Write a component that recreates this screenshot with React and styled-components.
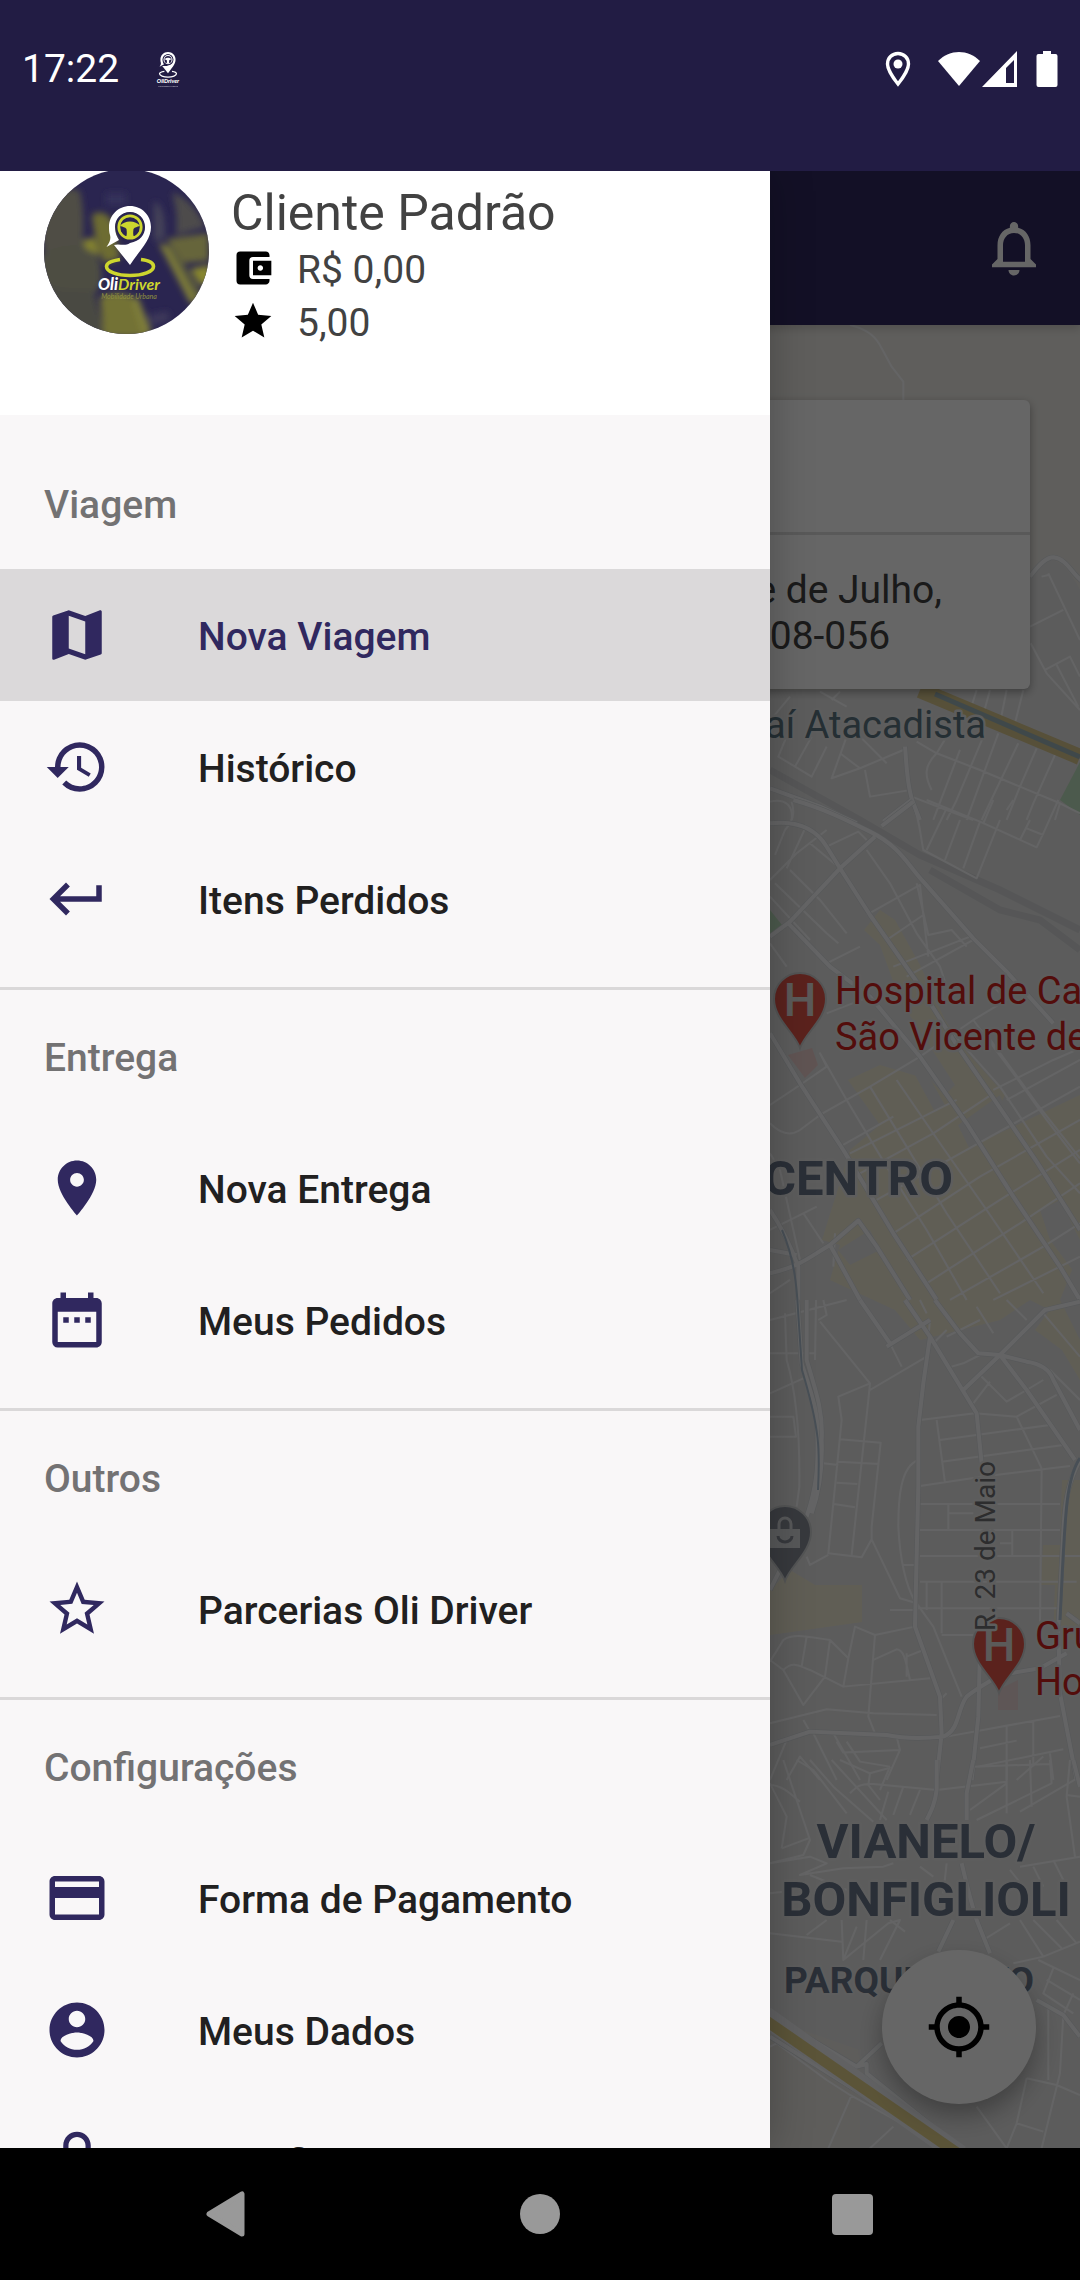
import React, { useState } from 'react';
import styled, { createGlobalStyle } from 'styled-components';
import {
  MdAccountBalanceWallet,
  MdCreditCard,
  MdDateRange,
  MdHistory,
  MdKeyboardReturn,
  MdLockOutline,
  MdMyLocation,
  MdNotificationsNone,
  MdStar,
  MdStarBorder,
} from 'react-icons/md';

const GlobalStyle = createGlobalStyle`
  * {
    box-sizing: border-box;
  }
  body {
    margin: 0;
    font-family: Roboto, 'Open Sans', sans-serif;
    background-color: #000;
  }
  button, a {
    font-family: inherit;
  }
`

const Screen = styled.div`
  display: flex;
  flex-direction: column;
  height: 100vh;
  overflow: hidden;
`

const StatusBar = styled.header`
  display: flex;
  align-items: center;
  height: 171px;
  padding: 0 22px 34px;
  background-color: #221c44;
  color: white;
`

const Clock = styled.span`
  flex: 1;
  display: flex;
  align-items: center;
  gap: 36px;
  font-size: 39px;
  line-height: 46px;
`

const StatusIcons = styled.div`
  display: flex;
  align-items: center;

  svg {
    display: block;
  }
  svg:first-child {
    margin-right: 27px;
  }
  svg:last-child {
    margin-left: 18px;
  }
`

const Content = styled.div`
  position: relative;
  flex: 1;
  min-height: 0;
  display: flex;
  flex-direction: column;
  overflow: hidden;
`

const AppBar = styled.div`
  position: relative;
  display: flex;
  align-items: center;
  justify-content: flex-end;
  height: 154px;
  padding: 0 33px;
  background-color: #302860;
  color: white;
  box-shadow: 0 4px 8px rgba(0, 0, 0, .15);
  z-index: 1;
`

const IconButton = styled.button`
  display: flex;
  padding: 0;
  border: 0;
  background: none;
  color: inherit;
  cursor: pointer;
`

const MapArea = styled.main`
  position: relative;
  flex: 1;
  min-height: 0;
  padding: 75px 50px;
  overflow: hidden;
`

const MapCanvas = styled.svg`
  position: absolute;
  inset: 0;
  width: 100%;
  height: 100%;
`

const AddressCard = styled.section`
  position: relative;
  border-radius: 6px;
  background-color: white;
  color: #424242;
  box-shadow: 0 3px 8px rgba(0, 0, 0, .35);
`

const AddressField = styled.div`
  height: 135px;
  border-bottom: 3px solid #dedede;
`

const Address = styled.p`
  width: fit-content;
  margin: 0 0 0 auto;
  padding: 32px 88px 30px 0;
  font-size: 39px;
  line-height: 46px;
`

const LocateButton = styled.button`
  position: absolute;
  right: 44px;
  bottom: 44px;
  display: flex;
  align-items: center;
  justify-content: center;
  width: 154px;
  height: 154px;
  border: 0;
  border-radius: 50%;
  background-color: white;
  color: black;
  box-shadow: 0 12px 24px rgba(0, 0, 0, .3);
  cursor: pointer;
`

const Scrim = styled.div`
  position: absolute;
  inset: 0;
  background-color: rgba(0, 0, 0, .6);
  z-index: 2;
`

const Drawer = styled.aside`
  position: absolute;
  top: 0;
  bottom: 0;
  left: 0;
  width: 770px;
  max-width: 90%;
  overflow: hidden;
  background-color: #f9f7f8;
  box-shadow: 0 0 40px rgba(0, 0, 0, .25);
  z-index: 3;
`

const Profile = styled.div`
  display: flex;
  gap: 22px;
  height: 246px;
  margin-top: -2px;
  padding-left: 44px;
  background-color: white;
  color: #424242;
`

const Avatar = styled.svg`
  flex: none;
  width: 165px;
  height: 165px;
  border-radius: 50%;
`

const ProfileInfo = styled.div`
  display: flex;
  flex-direction: column;
  gap: 4px;
  padding-top: 15px;
`

const Name = styled.h1`
  margin: 0;
  font-size: 50px;
  font-weight: 400;
  line-height: 58px;
`

const Stat = styled.div`
  display: flex;
  gap: 22px;
  font-size: 39px;
  line-height: 49px;

  svg {
    color: black;
  }
`

const Group = styled.section`
  padding-bottom: 22px;

  &:first-child {
    padding-top: 22px;
  }
  & + & {
    border-top: 3px solid #dad8d9;
  }
`

const GroupTitle = styled.h2`
  margin: 0;
  padding: 4px 44px 0;
  font-size: 39px;
  font-weight: 500;
  line-height: 128px;
  color: #737273;
`

const Item = styled.a`
  display: flex;
  align-items: center;
  gap: 88px;
  height: 132px;
  padding: 0 44px;
  background-color: ${props => (props.$active ? '#dbd9da' : 'transparent')};
  color: ${props => (props.$active ? '#30285f' : '#212020')};
  font-size: 39px;
  font-weight: 500;
  text-decoration: none;

  svg {
    flex: none;
    color: #30285f;
  }
  span {
    padding-top: 4px;
  }
`

const NavBar = styled.footer`
  display: flex;
  height: 132px;
  padding: 0 72px;
  background-color: black;
  color: #999;
`

const NavButton = styled(IconButton)`
  flex: 1;
  align-items: center;
  justify-content: center;
`

const MapIcon = () => (
  <svg width="66" height="66" viewBox="0 0 24 24" fill="currentColor">
    <path d="M20.5 3l-.16.03L15 5.1 9 3 3.36 4.9c-.21.07-.36.25-.36.48V20.5c0 .28.22.5.5.5l.16-.03L9 18.9l6 2.1 5.64-1.9c.21-.07.36-.25.36-.48V3.5c0-.28-.22-.5-.5-.5zM15 19l-6-2.11V5l6 2.11V19z" />
  </svg>
)

const PlaceIcon = () => (
  <svg width="66" height="66" viewBox="0 0 24 24" fill="currentColor">
    <path d="M12 2C8.13 2 5 5.13 5 9c0 5.25 7 13 7 13s7-7.75 7-13c0-3.87-3.13-7-7-7zm0 9.5c-1.38 0-2.5-1.12-2.5-2.5s1.12-2.5 2.5-2.5 2.5 1.12 2.5 2.5-1.12 2.5-2.5 2.5z" />
  </svg>
)

const AccountIcon = () => (
  <svg width="66" height="66" viewBox="0 0 24 24" fill="currentColor">
    <path d="M12 2C6.48 2 2 6.48 2 12s4.48 10 10 10 10-4.48 10-10S17.52 2 12 2zm0 3c1.66 0 3 1.34 3 3s-1.34 3-3 3-3-1.34-3-3 1.34-3 3-3zm0 14.2c-2.5 0-4.71-1.28-6-3.22.03-1.99 4-3.08 6-3.08 1.99 0 5.97 1.09 6 3.08-1.29 1.94-3.5 3.22-6 3.22z" />
  </svg>
)

const menu = [
  {
    title: 'Viagem',
    items: [
      { id: 'nova-viagem', label: 'Nova Viagem', icon: <MapIcon /> },
      { id: 'historico', label: 'Histórico', icon: <MdHistory size={66} /> },
      { id: 'itens-perdidos', label: 'Itens Perdidos', icon: <MdKeyboardReturn size={66} /> },
    ],
  },
  {
    title: 'Entrega',
    items: [
      { id: 'nova-entrega', label: 'Nova Entrega', icon: <PlaceIcon /> },
      { id: 'meus-pedidos', label: 'Meus Pedidos', icon: <MdDateRange size={66} /> },
    ],
  },
  {
    title: 'Outros',
    items: [
      { id: 'parcerias', label: 'Parcerias Oli Driver', icon: <MdStarBorder size={66} /> },
    ],
  },
  {
    title: 'Configurações',
    items: [
      { id: 'pagamento', label: 'Forma de Pagamento', icon: <MdCreditCard size={66} /> },
      { id: 'meus-dados', label: 'Meus Dados', icon: <AccountIcon /> },
      { id: 'senha', label: 'Redefinir Senha', icon: <MdLockOutline size={66} /> },
    ],
  },
]

// pin with the steering wheel, shared by the avatar and the notification icon
const LogoMark = ({ accent, hole }) => (
  <g>
    <path
      d="M76 90.5C66 92 62.500 94.500 62.500 97.500C62.500 102.500 73 106.500 86 106.500S109.500 102.500 109.500 97.500C109.500 94 105 91.500 97 90.500"
      fill="none"
      stroke={accent}
      strokeWidth="3.600"
    />
    <path d="M86 37C98 37 107 46.500 107 58C107 72 94 83 86 96L70 76C76 74 80 78 86 74C96 72 101 66 101 58C101 50 95 43 86 43C77 43 71 50 71 58C71 64 73 68 75 71L62.500 78C66 73 67 70 66 66C65 63 65 61 65 58C65 46.500 74 37 86 37Z" fill="#fff" />
    <circle cx="86" cy="58" r="14.500" fill={hole} />
    <circle cx="86" cy="58" r="11.200" fill="none" stroke={accent} strokeWidth="2.800" />
    <path d="M76 57C80 51 92 51 96 57C93 58 91 58 89.500 60C89 64 89 66 90 68H82C83 66 83 64 82.500 60C81 58 79 58 76 57Z" fill={accent} />
    <path d="M81.500 60.500L77 61.500C78 64.500 80 66 82 67ZM90.500 60.500L95 61.500C94 64.500 92 66 90 67Z" fill={hole} />
  </g>
)

const ClientAvatar = () => (
  <Avatar viewBox="0 0 165 165" role="img" aria-label="Oli Driver">
    <defs>
      <filter id="photo" x="-10%" y="-10%" width="120%" height="120%">
        <feGaussianBlur stdDeviation="3" />
      </filter>
    </defs>
    <rect width="165" height="165" fill="#2a2550" />
    <g filter="url(#photo)">
      <path d="M-5 50C8 22 26 16 36 22C40 40 40 60 38 78L0 84Z" fill="#4f4d45" />
      <path d="M-5 88C12 74 46 72 54 86C60 106 58 122 48 126L-5 118Z" fill="#4e4d42" />
      <path d="M0 120L50 122L62 170H10Z" fill="#4a4843" />
      <path d="M48 46C58 40 66 46 70 56L76 90L60 94C54 80 50 66 48 46Z" fill="#6d6c33" />
      <path d="M38 72L50 68L56 86L42 80Z" fill="#83822f" />
      <path d="M56 128C70 122 88 124 92 132L104 168H60Z" fill="#737236" />
      <path d="M88 130L94 128L108 164H98Z" fill="#7f7e3a" />
      <path d="M128 24C140 26 154 40 162 58L132 66C134 50 132 36 128 24Z" fill="#4d4b4c" />
      <path d="M110 32C120 36 122 56 120 70L110 72Z" fill="#454258" />
      <path d="M122 70L165 64V92L140 94Z" fill="#66653a" />
      <path d="M114 74L130 78L160 128L148 136Z" fill="#5c5b3e" />
      <path d="M146 100L166 96V114L156 116Z" fill="#87862f" />
      <path d="M116 76L122 76L152 130L146 134Z" fill="#807f38" />
      <path d="M104 146L124 142L126 152L108 156Z" fill="#3c395a" />
      <path d="M62 24H82V36H62Z" fill="#35315a" />
    </g>
    <LogoMark accent="#cdd62e" hole="#2a2550" />
    <g fontFamily="Lato, sans-serif" fontStyle="italic" textAnchor="middle">
      <text x="85" y="121" fontSize="16" fontWeight="900" fill="#fff">
        Oli<tspan fill="#cdd62e" fontWeight="700">Driver</tspan>
      </text>
      <text x="85" y="130" fontSize="7" fill="#8f9040">Mobilidade Urbana</text>
    </g>
  </Avatar>
)

const NotificationLogo = () => (
  <svg width="26" height="36" viewBox="50 34 72 100">
    <LogoMark accent="#fff" hole="#221c44" />
    <g fontFamily="Lato, sans-serif" fontStyle="italic" textAnchor="middle" fill="#fff">
      <text x="86" y="124" fontSize="16" fontWeight="900">OliDriver</text>
      <text x="86" y="133" fontSize="7" opacity=".6">Mobilidade Urbana</text>
    </g>
  </svg>
)

// Roads are kept per tile, in the tile's own units (3 to a pixel)
const tiles = [
  {
    y: 320,
    major: [
      'M810 770C840 730 860 712 880 712C920 716 935 760 965 782',
      'M435 1280C440 1330 440 1400 460 1450L480 1500',
      'M30 1405L180 1460L290 1510',
      'M370 1505L455 1440',
      'M545 1110L530 1150',
    ],
    minor: [
      'M270 15C330 30 350 55 365 85L395 140L430 185V240',
      'M810 920L910 870M865 760L960 960M845 770L865 765M812 970L860 1060L960 1170M855 1050L930 1010L960 1070M890 1035L955 1160',
      'M240 1115L215 1140M180 1115L260 1160M90 1130L40 1190M100 1200L55 1310L155 1370L200 1280M155 1250L105 1340M260 1250L215 1375L300 1345L430 1290M240 1300L300 1345M300 1250L350 1300L380 1330M315 1350L330 1430L440 1412',
      'M470 1265L530 1300L660 1350L780 1400L900 1450L960 1480M530 1300C490 1340 495 1370 515 1410M560 1250L530 1300M650 1110L625 1190M690 1110L660 1220M740 1110L720 1210M790 1110L765 1210M600 1290L520 1500M670 1250L590 1440L560 1500M715 1240L620 1500M775 1270L665 1500M830 1285L780 1400L740 1500M885 1305L820 1450L800 1500M455 1430L560 1470L640 1500M900 1450L885 1500',
      'M30 1445C80 1435 100 1460 95 1500',
    ],
  },
  {
    y: 800,
    major: [
      'M100 0C190 25 260 60 330 95C420 140 440 190 490 245L640 415L740 515L880 670',
      'M30 410L90 365L240 205L345 110M365 78L460 5',
      'M30 70C120 60 170 90 200 140L240 205L330 345L470 545L590 735L690 880L830 1085L960 1290',
      'M30 700L120 850L250 1050L400 1300L530 1500',
      'M85 370L210 500L330 590L480 770L620 970L760 1190L900 1400L960 1500',
      'M30 1420C120 1400 150 1370 210 1335L295 1262L350 1340L450 1500',
      'M30 1230C70 1290 100 1360 115 1400V1500M30 1350L110 1365M210 1335L300 1500',
    ],
    minor: [
      'M455 0C480 60 480 100 490 150L650 235L720 60M500 0L660 65L830 142L850 100L895 0M560 25L500 150M600 60L555 180M660 65L610 205M800 85L850 105M780 120L810 60M700 0L670 70M760 0L740 30',
      'M95 5C105 40 100 60 75 90L45 165M140 75L80 205M200 90L110 160L30 240M200 140L295 95L320 120M240 205L150 130M30 290L150 420M45 250L200 400L235 430M90 210L180 300L260 400M30 430L80 500M320 150L390 250L470 400L540 500L560 560M320 345L480 255L490 345L505 470M380 420L490 345M470 250L505 405L575 390L620 440M440 530L640 420M400 500L630 410',
      'M200 490L300 440M200 640L330 590M480 770L640 660L740 600L700 560M560 680L720 860L860 1070L960 1180M640 660L760 820L860 960L960 1090M670 690L830 910L960 1075M700 870L880 780L960 745M740 900L960 780',
      'M30 915L120 855L200 800L180 760L260 900L380 1100L500 1290L620 1500M180 945L330 860L480 770M30 970C60 1000 90 1010 120 990L180 945M240 1040L400 950M330 860L440 1040L560 1240L720 1480M410 840L540 1030L680 1230L850 1480M270 1060L590 900M300 1120L520 1000L700 880',
      'M350 1200L620 1050L960 860M400 1300L660 1130L960 960M440 1380L720 1200L960 1050M500 1450L780 1270L960 1150M570 1500L850 1340L960 1270M700 1500L960 1370',
      'M30 1060L60 1110L100 1290L120 1380M30 1290L130 1240L170 1220M130 1240L190 1330M225 1300L220 1400M30 1480L90 1440',
    ],
  },
  {
    y: 1300,
    major: [
      'M112 0L125 190C150 270 175 330 172 400C175 500 170 560 140 650M140 0V180C170 280 190 340 185 420C188 500 180 570 155 640M30 870L60 810',
      'M435 0L510 110L650 340L665 490M510 110L490 250L475 380V560L465 980L540 1190L545 1300L530 1440',
      'M525 0L600 100L655 160L720 165L800 185C840 190 870 210 880 240L960 390M720 165L800 270L945 480M610 270L720 165L855 30L960 5M380 140L510 60M300 0L390 130',
      'M960 480C930 540 915 580 910 700L895 980L900 1180L950 1440',
      'M30 1335L150 1295L380 1305C440 1318 500 1315 550 1310C600 1290 590 1230 620 1190C650 1165 680 1150 720 1125L840 1105L920 1060',
      'M660 1050L655 1250L635 1440M920 940L960 970',
    ],
    minor: [
      'M30 60L260 0M75 40L80 180C110 280 120 400 118 560L110 620M30 160H165M30 280L130 235M30 350H100L108 410H30M168 0L165 180M175 60L200 45L190 0M180 65L330 250L235 290L245 360L205 760L305 772L335 718L420 895L470 910M330 250L325 300L275 765M330 270L500 170L510 60M240 418L362 428L335 680L335 718M235 485L358 492M190 490L235 495M230 548L292 552M222 612L285 622M205 765L150 795L140 770',
      'M475 480C420 500 415 600 415 680C420 780 440 860 465 905M430 795H465M390 130L425 200M480 0L500 40M520 130L560 90M575 200L610 190L660 165M560 110L660 60M650 20L700 100M660 225L740 305L800 270L850 240M620 260L660 225M740 0L800 60M850 40L960 170M690 245L640 310M870 210L960 300',
      'M480 360L645 340L770 350L890 285M770 350L845 505M540 420L870 375M545 485L910 435M530 360L555 548M480 558L665 530L930 498M480 612H900M565 612V690M480 690H900M565 640H640M757 690V765M720 730H757M480 768H960M480 845H950M500 845V930M545 845V1000M470 925H900M545 1005H640M845 510L840 980M470 910L520 980L560 1080L605 1190M390 930H470',
      'M30 1085L70 1020C100 1000 140 1010 210 1020L265 1075L250 1160M30 1080L70 1110C100 1080 120 1100 150 1110L250 1160L510 1135M70 1110L130 1215L195 1130L210 1020M125 1100L140 1010M265 1075L285 980L345 1005L465 980M345 1005L325 1250L345 1300M340 1080L410 1048C430 1050 435 1070 450 1140M440 1070L490 1050M30 1270L200 1228L340 1240L530 1245M130 1260L150 1295M30 1440L80 1320M230 1325L250 1358L420 1350M160 1300L230 1440M220 1300L300 1440M410 1310L420 1350L380 1440M260 1325L300 1385L390 1400M80 1440L120 1370L180 1440M470 910V980',
      'M560 1310L900 1248M660 1345L770 1322M655 1400L910 1348M740 1280V1440M820 1265V1400M870 1360L880 1440M770 1440L850 1370M540 1200L560 1180M440 1130V1060',
    ],
  },
  {
    y: 1760,
    major: [
      'M530 0V90C525 130 515 150 500 180M640 0L620 100V180M605 310C615 350 625 400 650 480L690 580M580 480L535 575M940 0L960 80',
      'M30 765L290 920L365 850M290 920L320 912V940L600 1165M30 830L230 955L350 1030L560 1165M830 720L910 765L960 830',
    ],
    minor: [
      'M70 0L150 240L130 285L30 310M110 0L160 30L260 160M30 75C70 75 100 110 120 125M30 70L80 170L65 265M150 0L220 80L340 185M215 0L380 180M270 100C290 80 300 70 340 72L530 90L740 65M240 0L330 40L385 25M330 40L325 75L360 120M390 20L360 90M430 80L400 165M480 90L450 165M385 95L360 180M640 20L870 12M740 0V160M810 0L815 140M870 0L875 70L650 180M740 70L630 150M920 105L960 110M960 50L780 155M930 0L920 110L945 290',
      'M65 265L145 235M30 310L150 290L200 310L120 345L250 325L370 320L400 310M150 345L260 390M480 320L520 350M30 400L70 395M550 400L560 310M780 320L960 290M820 320L850 380M880 300L920 380M750 330L790 380M30 520L245 545M140 525L200 480M245 480L250 600L290 500M310 600L320 480M250 600L385 490L420 480L360 600M390 480L435 515M670 540L750 490M780 480L850 590M820 480L905 565M850 590L960 545M760 610L850 590M890 480L950 550',
      'M30 860L50 850L200 960L270 1005L560 1165M275 1005L205 1165M400 1100L330 1165M650 1040L740 1165M800 955L890 975L960 1005M800 955L770 1090L740 1165M770 1090L850 1115M910 765L900 940L845 1165M880 625L850 700L940 760M835 600L960 660M940 700L910 765M860 660L960 720M865 740V960',
    ],
  },
]

const MapPin = ({ x, y, color, children }) => (
  <g transform={`translate(${x} ${y})`}>
    <path
      d="M0 49C-5 34 -26 20 -26 0A26 26 0 0 1 26 0C26 20 5 34 0 49Z"
      fill={color}
      stroke="#cfd1d3"
      strokeWidth="2"
    />
    {children}
  </g>
)

const CityMap = () => (
  <MapCanvas viewBox="0 325 1080 1823" preserveAspectRatio="xMidYMid slice">
    <rect y="325" width="1080" height="1823" fill="#e6e6e6" />
    <path d="M760 325H1080V590C1060 550 1040 550 1020 590L1000 690H760Z" fill="#edebe6" />
    <path d="M760 2015L860 2050V2148H760Z" fill="#eae8e4" />

    {/* parks and commercial blocks */}
    <path d="M1080 762L1060 800L1080 815Z" fill="#bfe0c0" />
    <path d="M770 910L782 925L770 935Z" fill="#bfe0c0" />
    <g fill="#f1ecd4">
      <path d="M864 930L880 910L895 920L920 965L945 1020L965 1050L1005 1095L1000 1105L985 1110L960 1130L975 1145L1080 1095V1250L1060 1300L1080 1340V1380L1050 1310L1030 1300L1000 1320L960 1330L920 1340L895 1310L830 1280L840 1245L822 1240L850 1150L880 1125L848 1080L880 1065L930 1080L945 1095L955 1085L900 1000L880 945Z" />
      <path d="M1035 1330L1050 1310L1080 1345V1380L1062 1350ZM1062 1480H1080V1640H1053L1055 1585H1041L1043 1545H1060Z" />
      <path d="M770 1590L790 1570L815 1585H862V1622L770 1635Z" />
    </g>
    <g fill="#e6e6e6">
      <path d="M958 1125L1000 1095L1010 1120L970 1150Z" />
      <path d="M1040 1210L1060 1200L1080 1240V1280L1050 1240Z" />
      <path d="M915 1075L925 1070L945 1105L935 1112Z" />
      <path d="M838 1250L870 1230L880 1250L850 1265Z" />
    </g>
    <path d="M788 1055L812 1048L818 1065L805 1078Z" fill="#f0d2d0" />
    <path d="M998 1690L1018 1680V1710H998Z" fill="#ead6d6" />

    {/* railway */}
    <path d="M770 770L860 820L920 855L1000 890L1080 930M930 870L1000 910L1040 920L1080 950" fill="none" stroke="#d6d8d9" strokeWidth="7" />

    {tiles.map(tile => (
      <g key={tile.y} transform={`translate(760 ${tile.y}) scale(.3333)`} fill="none" strokeLinejoin="round">
        <path d={tile.minor.join('')} stroke="#fafbfc" strokeWidth="6" />
        <path d={tile.major.join('')} stroke="#d9dce0" strokeWidth="16" />
        <path d={tile.major.join('')} stroke="#fafbfc" strokeWidth="12" />
      </g>
    ))}

    {/* river and highways */}
    <g fill="none">
      <path d="M782 1230C795 1260 797 1290 798 1310L802 1370C820 1430 820 1450 818 1490" stroke="#b4c6d6" strokeWidth="2" />
      <path d="M1080 1458C1065 1480 1065 1520 1060 1620" stroke="#b4c6d6" strokeWidth="3" />
      <path d="M920 690L1080 757" stroke="#d9c88e" strokeWidth="16" />
      <path d="M935 694L1080 757" stroke="#9fb4b8" strokeWidth="5" />
      <path d="M765 2016L960 2155" stroke="#f2f3f6" strokeWidth="20" />
      <path d="M765 2020L960 2155" stroke="#e4d28c" strokeWidth="11" />
    </g>

    <MapPin x="800" y="999" color="#e35649">
      <text y="17" fontSize="46" fontWeight="500" textAnchor="middle" fill="#e4e0df">H</text>
    </MapPin>
    <MapPin x="999" y="1644" color="#e35649">
      <text y="17" fontSize="46" fontWeight="500" textAnchor="middle" fill="#e4e0df">H</text>
    </MapPin>
    <MapPin x="785" y="1532" color="#8a8f9a">
      <path d="M-15 -3H15V16H-15Z" fill="#d9dbdf" />
      <path d="M-6 -2V-8A6 6 0 0 1 6 -8V-2" fill="none" stroke="#d9dbdf" strokeWidth="3" />
      <path d="M-7 4A7 6 0 0 0 7 4" fill="none" stroke="#8a8f9a" strokeWidth="3" />
    </MapPin>

    <g fontSize="38" stroke="#e9e9e9" strokeWidth="5" strokeLinejoin="round" paintOrder="stroke">
      <text x="986" y="738" textAnchor="end" fill="#5d7682">Assaí Atacadista</text>
      <g fill="#d0211d">
        <text x="835" y="1004">Hospital de Caridade</text>
        <text x="835" y="1050">São Vicente de Paulo</text>
        <text x="1035" y="1649">Grupo Sobam</text>
        <text x="1035" y="1695">Hospital</text>
      </g>
      <text fontSize="28" fill="#707174" transform="translate(995 1631) rotate(-90)">R. 23 de Maio</text>
      <g fill="#69768a" fontSize="49" fontWeight="700">
        <text x="953" y="1195" textAnchor="end">CENTRO</text>
        <text x="926" y="1858" textAnchor="middle">VIANELO/</text>
        <text x="926" y="1916" textAnchor="middle">BONFIGLIOLI</text>
        <text x="784" y="1993" fontSize="37">PARQUE NOVO</text>
      </g>
    </g>
  </MapCanvas>
)

const App = () => {
  const [active, setActive] = useState('nova-viagem')

  const onSelect = (e, id) => {
    e.preventDefault()
    setActive(id)
  }

  return (
    <>
      <GlobalStyle />
      <Screen>
        <StatusBar>
          <Clock>
            17:22
            <NotificationLogo />
          </Clock>
          <StatusIcons>
            <svg width="26" height="36" viewBox="0 0 26 36">
              <path d="M13 2.500C7 2.500 2.500 7 2.500 13C2.500 20 13 33 13 33S23.500 20 23.500 13C23.500 7 19 2.500 13 2.500Z" fill="none" stroke="#fff" strokeWidth="3.400" />
              <circle cx="13" cy="13" r="4.500" fill="#fff" />
            </svg>
            <svg width="42" height="36" viewBox="0 0 42 36">
              <path d="M21 35L0 10C12 -2 30 -2 42 10Z" fill="#fff" />
            </svg>
            <svg width="38" height="36" viewBox="0 0 38 36">
              <path d="M37 0V36H2ZM34 9L26 17V32H34Z" fill="#fff" fillRule="evenodd" />
            </svg>
            <svg width="22" height="38" viewBox="0 0 22 38">
              <path d="M7 1H15V4H19.500A2 2 0 0 1 21.500 6V35A2 2 0 0 1 19.500 37H2.500A2 2 0 0 1 .5 35V6A2 2 0 0 1 2.500 4H7Z" fill="#fff" />
            </svg>
          </StatusIcons>
        </StatusBar>

        <Content>
          <AppBar>
            <IconButton aria-label="Notificações">
              <MdNotificationsNone size={66} />
            </IconButton>
          </AppBar>
          <MapArea>
            <CityMap />
            <AddressCard>
              <AddressField />
              <Address>
                Avenida Nove de Julho,
                <br />
                Jundiaí, - 13208-056
              </Address>
            </AddressCard>
            <LocateButton aria-label="Minha localização">
              <MdMyLocation size={66} />
            </LocateButton>
          </MapArea>
          <Scrim />

          <Drawer>
            <Profile>
              <ClientAvatar />
              <ProfileInfo>
                <Name>Cliente Padrão</Name>
                <Stat>
                  <MdAccountBalanceWallet size={44} />
                  <span>R$ 0,00</span>
                </Stat>
                <Stat>
                  <MdStar size={44} />
                  <span>5,00</span>
                </Stat>
              </ProfileInfo>
            </Profile>
            <nav>
              {menu.map(group => (
                <Group key={group.title}>
                  <GroupTitle>{group.title}</GroupTitle>
                  {group.items.map(item => (
                    <Item
                      key={item.id}
                      href={`#${item.id}`}
                      $active={item.id === active}
                      onClick={e => onSelect(e, item.id)}
                    >
                      {item.icon}
                      <span>{item.label}</span>
                    </Item>
                  ))}
                </Group>
              ))}
            </nav>
          </Drawer>
        </Content>

        <NavBar>
          <NavButton aria-label="Voltar">
            <svg width="44" height="46" viewBox="0 0 44 46">
              <path d="M36 3V43L3 23Z" fill="currentColor" stroke="currentColor" strokeWidth="5" strokeLinejoin="round" />
            </svg>
          </NavButton>
          <NavButton aria-label="Início">
            <svg width="40" height="40" viewBox="0 0 40 40">
              <circle cx="20" cy="20" r="20" fill="currentColor" />
            </svg>
          </NavButton>
          <NavButton aria-label="Recentes">
            <svg width="41" height="41" viewBox="0 0 41 41">
              <rect width="41" height="41" rx="4" fill="currentColor" />
            </svg>
          </NavButton>
        </NavBar>
      </Screen>
    </>
  )
}

export default App
